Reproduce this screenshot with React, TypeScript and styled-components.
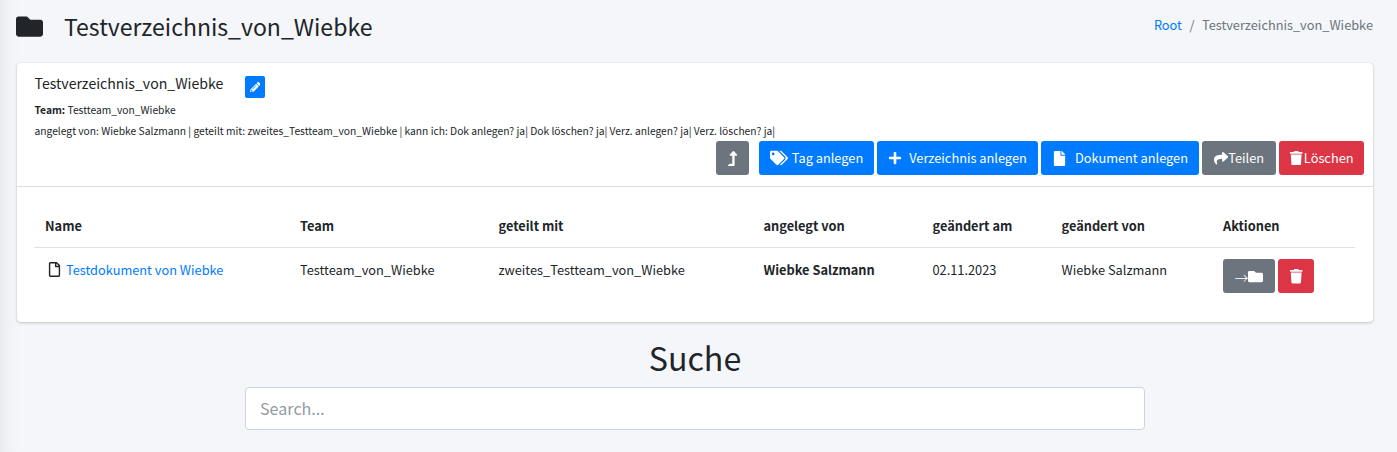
import React from 'react';
import styled, { createGlobalStyle } from 'styled-components';
import { FaFolder, FaPencilAlt, FaLevelUpAlt, FaTags, FaPlus, FaFile, FaShare, FaTrash, FaRegFile } from 'react-icons/fa';

const Global = createGlobalStyle`
  *, *::before, *::after { box-sizing: border-box; }
  body {
    margin: 0;
    background: #f4f6f9;
    color: #212529;
    font-family: "Noto Sans CJK SC", "Noto Sans", sans-serif;
    font-size: 12.79px;
    line-height: 21.6px;
  }
  h1, p { margin: 0; font-weight: 400; }
  a { color: #007bff; text-decoration: none; }
`;

const Page = styled.main`
  height: 452px;
  overflow: hidden;
  padding: 0 24px 0 17px;
  background: linear-gradient(to right, #e9ebee 0, #f0f2f5 8px, #f4f6f9 20px);
`;
const Header = styled.header`
  display: flex;
  justify-content: space-between;
  height: 63px;
`;
const Title = styled.h1`
  display: flex;
  align-items: center;
  gap: 21px;
  height: 52px;
  margin-left: -1px;
  font-size: 23.05px;
  line-height: 35px;
`;
const Crumbs = styled.nav`
  display: flex;
  gap: 7.5px;
  padding-top: 14px;
  color: #6c757d;
`;
const Card = styled.section`
  height: 259px;
  background: #fff;
  border-radius: 4px;
  box-shadow: 0 0 1px rgba(0, 0, 0, 0.13), 0 1px 3px rgba(0, 0, 0, 0.2);
`;
const CardHeader = styled.div`
  height: 124px;
  padding: 10px 9px 0 17.5px;
  border-bottom: 1px solid rgba(0, 0, 0, 0.125);
`;
const NameRow = styled.div`
  display: flex;
  gap: 21.5px;
  height: 26px;
  font-size: 14.12px;
`;
const EditButton = styled.button`
  display: flex;
  align-items: center;
  justify-content: center;
  width: 20px;
  height: 22px;
  margin-top: 3px;
  padding: 0;
  border: 0;
  border-radius: 2px;
  background: #007bff;
  color: #fff;
`;
const Meta = styled.p`
  font-size: 10.28px;
  line-height: 21px;
`;
const Toolbar = styled.div`
  display: flex;
  justify-content: flex-end;
  gap: 3px;
`;
const colors = { primary: '#007bff', secondary: '#6c757d', danger: '#dc3545' };
const Button = styled.button<{ $tone: keyof typeof colors; $w: number; $gap?: number; $mr?: number }>`
  display: flex;
  align-items: center;
  justify-content: center;
  gap: ${p => p.$gap ?? 0}px;
  width: ${p => p.$w}px;
  height: 34px;
  margin: 0 ${p => p.$mr ?? 0}px 0 0;
  padding: 0;
  border: 0;
  border-radius: 3px;
  background: ${p => colors[p.$tone]};
  color: #fff;
  font: inherit;
  white-space: nowrap;
  svg { flex: none; }
`;
const Arrow = styled.span`
  padding-top: 5px;
  font-size: 13.5px;
  font-weight: 300;
`;
const Table = styled.div`
  margin: 18px 18px 0 17px;
`;
const Row = styled.div<{ $head?: boolean }>`
  display: grid;
  grid-template-columns: 255px 198.5px 265px 169px 129px 161.5px 1fr;
  padding: ${p => (p.$head ? '10px 0 10px 11px' : '11px 0 0 11px')};
  border-bottom: ${p => (p.$head ? '1px solid #dee2e6' : '0')};
  font-weight: ${p => (p.$head ? 700 : 400)};
`;
const DocCell = styled.div`
  display: flex;
  gap: 4px;
  padding-left: 2px;
  svg { margin-top: 3px; }
`;
const Actions = styled.div`
  display: flex;
  gap: 3px;
  svg { position: relative; top: 1px; }
`;
const Search = styled.section`
  display: flex;
  flex-direction: column;
  align-items: center;
  padding-top: 14px;
`;
const SearchTitle = styled.h1`
  font-size: 32.2px;
  line-height: 43px;
  margin-bottom: 8px;
`;
const Input = styled.input`
  width: 900px;
  height: 43px;
  padding: 0 14px 2px;
  border: 1px solid #ced4da;
  border-radius: 4px;
  background: #fff;
  font-family: inherit;
  font-size: 16.1px;
  &::placeholder { color: #939ba2; opacity: 1; }
`;

export default function App() {
  return (
    <Page>
      <Global />
      <Header>
        <Title><FaFolder size={27} /><span>Testverzeichnis_von_Wiebke</span></Title>
        <Crumbs><a>Root</a><span>/</span><span>Testverzeichnis_von_Wiebke</span></Crumbs>
      </Header>
      <Card>
        <CardHeader>
          <NameRow>
            <span>Testverzeichnis_von_Wiebke</span>
            <EditButton><FaPencilAlt size={10.5} /></EditButton>
          </NameRow>
          <Meta><b>Team:</b> Testteam_von_Wiebke</Meta>
          <Meta>angelegt von: Wiebke Salzmann | geteilt mit: zweites_Testteam_von_Wiebke | kann ich: Dok anlegen? ja| Dok löschen? ja| Verz. anlegen? ja| Verz. löschen? ja|</Meta>
          <Toolbar>
            <Button $tone="secondary" $w={33} $mr={7}><FaLevelUpAlt size={15} /></Button>
            <Button $tone="primary" $w={115} $gap={4}><FaTags size={18} /><span>Tag anlegen</span></Button>
            <Button $tone="primary" $w={161} $gap={7}><FaPlus size={14} /><span>Verzeichnis anlegen</span></Button>
            <Button $tone="primary" $w={158} $gap={8}><FaFile size={15} /><span>Dokument anlegen</span></Button>
            <Button $tone="secondary" $w={74}><FaShare size={14.4} /><span>Teilen</span></Button>
            <Button $tone="danger" $w={85}><FaTrash size={14.4} /><span>Löschen</span></Button>
          </Toolbar>
        </CardHeader>
        <Table>
          <Row $head>
            <span>Name</span><span>Team</span><span>geteilt mit</span><span>angelegt von</span>
            <span>geändert am</span><span>geändert von</span><span>Aktionen</span>
          </Row>
          <Row>
            <DocCell><FaRegFile size={15} /><a>Testdokument von Wiebke</a></DocCell>
            <span>Testteam_von_Wiebke</span>
            <span>zweites_Testteam_von_Wiebke</span>
            <b>Wiebke Salzmann</b>
            <span>02.11.2023</span>
            <span>Wiebke Salzmann</span>
            <Actions>
              <Button $tone="secondary" $w={52}><Arrow>→</Arrow><FaFolder size={15} /></Button>
              <Button $tone="danger" $w={36}><FaTrash size={14.4} /></Button>
            </Actions>
          </Row>
        </Table>
      </Card>
      <Search>
        <SearchTitle>Suche</SearchTitle>
        <Input placeholder="Search..." />
      </Search>
    </Page>
  );
}
